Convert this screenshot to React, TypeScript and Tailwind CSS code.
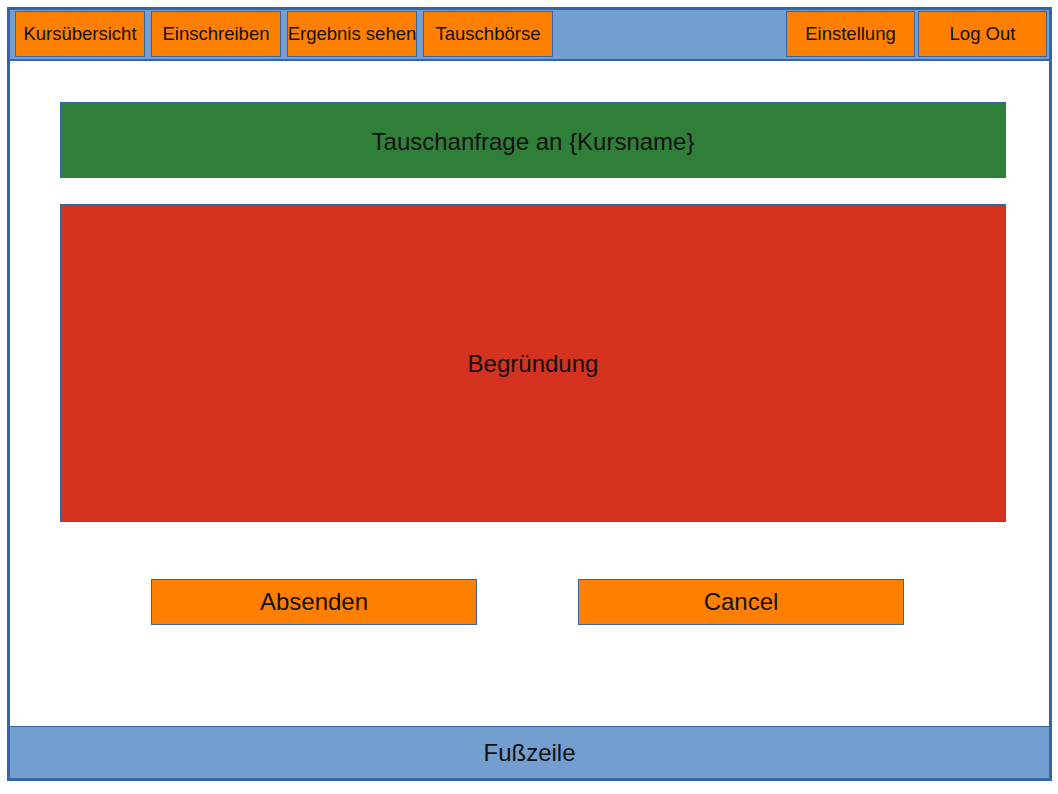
const navLeft = ['Kursübersicht', 'Einschreiben', 'Ergebnis sehen', 'Tauschbörse']
const navRight = ['Einstellung', 'Log Out']

function NavButton({ label }: { label: string }) {
  return (
    <button className="w-[130px] h-[46px] bg-[#ff8000] border border-[#3465a4] text-[18.5px] text-[#111] whitespace-nowrap flex items-center justify-center overflow-visible leading-none pt-px">
      {label}
    </button>
  )
}

export default function App() {
  return (
    <div className="w-[1058px] h-[794px] bg-white pt-[7px] pl-[7px]" style={{ fontFamily: '"Liberation Sans", Arial, sans-serif' }}>
      <div className="w-[1045px] h-[774px] border-[3px] border-[#3465a4] flex flex-col">
        <header className="h-[51px] bg-[#729fcf] border-b-2 border-[#3465a4] flex items-start pt-px pl-[5px] pr-[2px]">
          <div className="flex gap-[6px]">
            {navLeft.map(l => <NavButton key={l} label={l} />)}
          </div>
          <div className="ml-auto flex gap-[3px] [&>button]:w-[129px]">
            {navRight.map(l => <NavButton key={l} label={l} />)}
          </div>
        </header>

        <main className="h-[665px] flex flex-col pt-[41px] pl-[50px]">
          <div className="w-[946px] h-[76px] bg-[#307f39] border-[1.5px] border-[#3465a4] flex items-center justify-center pt-[3px] text-[24px] text-[#111]">
            Tauschanfrage an {'{Kursname}'}
          </div>
          <div className="mt-[26px] w-[946px] h-[318px] bg-[#d5321f] border border-[#3465a4] flex items-center justify-center pt-[2px] text-[24px] text-[#111]">
            Begründung
          </div>
          <div className="mt-[57px] ml-[91px] flex gap-[101px]">
            <button className="w-[326px] h-[46px] bg-[#ff8000] border border-[#3465a4] text-[24px] text-[#111]">Absenden</button>
            <button className="w-[326px] h-[46px] bg-[#ff8000] border border-[#3465a4] text-[24px] text-[#111]">Cancel</button>
          </div>
        </main>

        <footer className="flex-1 bg-[#729fcf] border-t-[1.5px] border-[#3465a4] flex items-center justify-center text-[24px] text-[#111]">
          Fußzeile
        </footer>
      </div>
    </div>
  )
}
